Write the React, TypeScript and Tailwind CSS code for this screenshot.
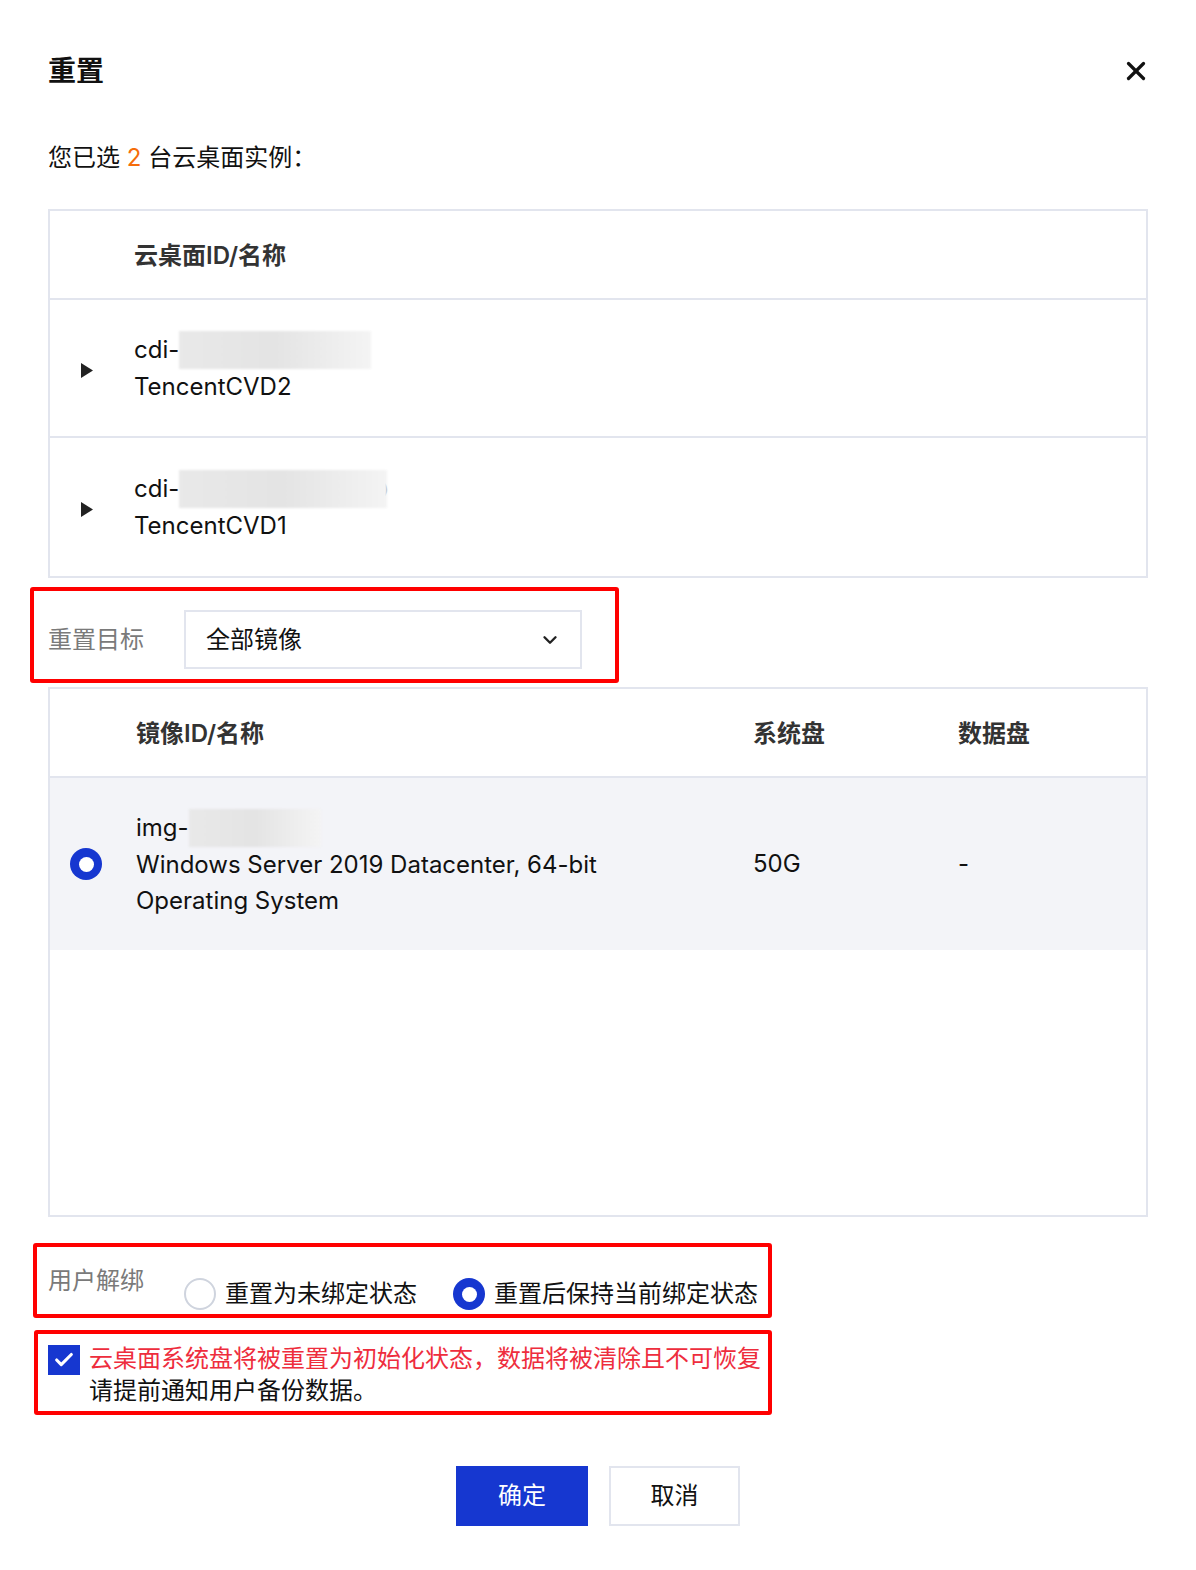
import React from 'react';
import { X, ChevronDown, Check } from 'lucide-react';

const font = { fontFamily: 'Inter, "Noto Sans CJK SC", sans-serif' };

const Blur: React.FC<{ w: string }> = ({ w }) => (
    <span className={`inline-block h-[38px] ${w} align-middle bg-linear-to-r from-[#e9e9e9] via-[#e4e4e4] to-[#f4f4f4] blur-[1px]`} />
);

const Radio: React.FC<{ on?: boolean }> = ({ on }) =>
    on ? (
        <span className="flex h-[32px] w-[32px] shrink-0 items-center justify-center rounded-full bg-[#1637d0]">
            <span className="h-[15px] w-[15px] rounded-full bg-white" />
        </span>
    ) : (
        <span className="h-[32px] w-[32px] shrink-0 rounded-full border-2 border-[#cfd4de] bg-white" />
    );

const Triangle = () => (
    <svg width="14" height="17" viewBox="0 0 14 17" className="shrink-0">
        <path d="M1 1 L13 8.5 L1 16 Z" fill="#222" />
    </svg>
);

const DesktopRow: React.FC<{ name: string; blurW: string; tail?: boolean; last?: boolean }> = ({ name, blurW, tail, last }) => (
    <div className={`flex h-[138px] items-center ${last ? '' : 'border-b-2 border-[#e2e5ee]'}`}>
        <div className="w-[84px] pl-[30px] pt-[4px]">
            <Triangle />
        </div>
        <div className="text-[24px] leading-[36px] text-[#111]">
            <div className="flex items-center">
                cdi-<Blur w={blurW} />
                {tail && <span className="-ml-[4px] text-[14px] text-[#666]">)</span>}
            </div>
            <div>{name}</div>
        </div>
    </div>
);

export default function App() {
    return (
        <div className="w-[1196px] min-h-[1570px] bg-white px-[48px] pt-[51px] pb-[46px]" style={font}>
            <div className="flex items-center justify-between">
                <h1 className="text-[28px] font-bold leading-[40px] text-[#111]">重置</h1>
                <X size={30} strokeWidth={2.6} className="text-[#111] -mr-[3px]" />
            </div>

            <p className="mt-[51px] text-[24px] leading-[32px] text-[#111]">
                您已选 <span className="text-[#f56c0a]">2</span> 台云桌面实例：
            </p>

            <div className="mt-[35px] border-2 border-[#e2e5ee]">
                <div className="flex h-[89px] items-center border-b-2 border-[#e2e5ee] pl-[84px] pt-[3px] text-[24px] font-semibold text-[#333]">
                    云桌面ID/名称
                </div>
                <DesktopRow name="TencentCVD2" blurW="w-[192px]" />
                <DesktopRow name="TencentCVD1" blurW="w-[208px]" tail last />
            </div>

            <div className="-ml-[18px] mt-[9px] flex w-[589px] items-center rounded-[3px] border-4 border-[#ff0000] pt-[19px] pb-[10px] pl-[14px]">
                <span className="w-[136px] text-[24px] text-[#7a7a7a]">重置目标</span>
                <div className="flex h-[59px] w-[398px] items-center justify-between border-2 border-[#e2e5ee] pl-[20px] pr-[19px]">
                    <span className="text-[24px] text-[#111]">全部镜像</span>
                    <ChevronDown size={22} strokeWidth={2.6} className="text-[#222]" />
                </div>
            </div>

            <div className="mt-[4px] h-[530px] border-2 border-[#e2e5ee]">
                <div className="grid h-[89px] grid-cols-[86px_617px_205px_1fr] items-center border-b-2 border-[#e2e5ee] pt-[3px] text-[24px] font-semibold text-[#333]">
                    <span />
                    <span>镜像ID/名称</span>
                    <span>系统盘</span>
                    <span>数据盘</span>
                </div>
                <div className="grid h-[172px] grid-cols-[86px_617px_205px_1fr] items-center bg-[#f3f4f8] text-[24px] leading-[36px] text-[#111]">
                    <div className="pl-[20px]">
                        <Radio on />
                    </div>
                    <div>
                        <div className="flex items-center">
                            img-<Blur w="w-[132px]" />
                        </div>
                        <div>Windows Server 2019 Datacenter, 64-bit</div>
                        <div>Operating System</div>
                    </div>
                    <span>50G</span>
                    <span>-</span>
                </div>
            </div>

            <div className="-ml-[15px] mt-[26px] flex w-[739px] items-start rounded-[3px] border-4 border-[#ff0000] pt-[17px] pb-[4px] pl-[11px]">
                <span className="w-[136px] text-[24px] leading-[34px] text-[#7a7a7a]">用户解绑</span>
                <div className="mt-[14px] flex h-[32px] items-center">
                    <Radio />
                    <span className="ml-[9px] text-[24px] leading-[32px] text-[#111]">重置为未绑定状态</span>
                    <span className="ml-[36px]">
                        <Radio on />
                    </span>
                    <span className="ml-[9px] text-[24px] leading-[32px] text-[#111]">重置后保持当前绑定状态</span>
                </div>
            </div>

            <div className="-ml-[14px] mt-[12px] flex w-[738px] items-start rounded-[3px] border-4 border-[#ff0000] pt-[9px] pb-[4px] pl-[10px]">
                <span className="mt-[2px] flex h-[30px] w-[32px] shrink-0 items-center justify-center bg-[#1637d0]">
                    <Check size={22} strokeWidth={3.4} className="text-white" />
                </span>
                <div className="ml-[9px] text-[24px] leading-[32px]">
                    <div className="text-[#ee2d3d]">云桌面系统盘将被重置为初始化状态，数据将被清除且不可恢复</div>
                    <div className="text-[#111]">请提前通知用户备份数据。</div>
                </div>
            </div>

            <div className="mt-[51px] flex justify-center gap-[21px]">
                <button className="h-[60px] w-[132px] bg-[#1637d0] text-[24px] text-white">确定</button>
                <button className="h-[60px] w-[131px] border-2 border-[#e2e5ee] bg-white text-[24px] text-[#111]">取消</button>
            </div>
        </div>
    );
}
